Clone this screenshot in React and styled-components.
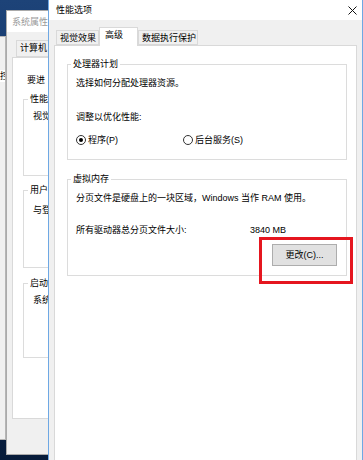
import React from 'react';
import styled, { createGlobalStyle } from 'styled-components';

const GlobalStyle = createGlobalStyle`
  html, body {
    margin: 0;
    padding: 0;
  }
  body {
    font-family: "Liberation Sans", "Noto Sans CJK SC", sans-serif;
    font-size: 9px;
    line-height: 12px;
    color: #000;
  }
`;

const Desktop = styled.div`
  position: relative;
  width: 363px;
  height: 460px;
  overflow: hidden;
  background: linear-gradient(180deg, #1d4378 0%, #12346a 30%, #071c3a 100%);
`;

// windows sit on the desktop, so they are placed by coordinates
const Window = styled.div`
  position: absolute;
  left: ${p => p.$left}px;
  top: ${p => p.$top}px;
  width: ${p => p.$w}px;
  height: ${p => p.$h}px;
  box-sizing: border-box;
  border: 1px solid ${p => p.$border || '#aaaaaa'};
  background: #f0f0f0;
  display: flex;
  flex-direction: column;
  overflow: hidden;
`;

const SideText = styled.div`
  margin-top: 33px;
  padding-left: 99px;
  background: #fff;
  white-space: nowrap;
`;

const TitleBar = styled.div`
  flex: none;
  height: ${p => p.$h}px;
  background: #fff;
  display: flex;
  align-items: center;
  justify-content: space-between;
  padding: 0 5px 0 ${p => p.$pl}px;
  color: ${p => (p.$inactive ? '#9a9a9a' : '#000')};
`;

const Body = styled.div`
  flex: 1;
  display: flex;
  flex-direction: column;
  padding: ${p => p.$pad};
  min-height: 0;
`;

const TabStrip = styled.div`
  flex: none;
  display: flex;
  align-items: flex-end;
  padding-left: ${p => p.$indent}px;
  height: ${p => p.$h}px;
`;

const Tab = styled.div`
  box-sizing: border-box;
  flex: none;
  width: ${p => p.$w}px;
  height: ${p => (p.$active ? 19 : p.$h || 15)}px;
  padding: ${p => (p.$active ? '1px 0 0 5px' : '1px 0 0 3px')};
  background: ${p => (p.$active ? '#fff' : '#f0f0f0')};
  border: 1px solid #d9d9d9;
  border-bottom: ${p => (p.$active ? 'none' : '1px solid #d9d9d9')};
  margin-bottom: ${p => (p.$active ? '-1px' : '0')};
  position: relative;
  z-index: ${p => (p.$active ? 1 : 0)};
  white-space: nowrap;
  overflow: hidden;
`;

const Panel = styled.div`
  flex: 1;
  background: #fff;
  border: 1px solid #d9d9d9;
  padding: ${p => p.$pad};
  display: flex;
  flex-direction: column;
`;

const Group = styled.fieldset`
  margin: ${p => p.$mt || 0}px 0 0 0;
  padding: ${p => p.$pad};
  border: 1px solid #dcdcdc;
  min-width: 0;
  box-sizing: border-box;
  height: ${p => (p.$h ? `${p.$h}px` : 'auto')};
  flex: none;
`;

const Legend = styled.legend`
  padding: 0 2px;
  margin-left: -5px;
  line-height: 12px;
`;

const Line = styled.div`
  margin-top: ${p => p.$mt || 0}px;
  margin-left: ${p => p.$ml || 0}px;
  white-space: nowrap;
`;

const RadioRow = styled.div`
  display: flex;
  margin-top: 11px;
  height: 12px;
`;

const RadioOption = styled.label`
  display: flex;
  align-items: center;
  width: ${p => p.$w}px;
  white-space: nowrap;
`;

const RadioDot = styled.span`
  box-sizing: border-box;
  width: 10px;
  height: 10px;
  border-radius: 50%;
  border: 1px solid #333;
  background: #fff;
  margin-right: 2px;
  display: flex;
  align-items: center;
  justify-content: center;

  &::after {
    content: '';
    width: 4px;
    height: 4px;
    border-radius: 50%;
    background: ${p => (p.$checked ? '#000' : 'transparent')};
  }
`;

const SizeRow = styled.div`
  display: grid;
  grid-template-columns: 174px auto;
  margin-top: 20px;
  white-space: nowrap;
`;

const ButtonRow = styled.div`
  display: flex;
  justify-content: flex-end;
  margin-top: 8px;
`;

const Highlight = styled.div`
  position: relative;

  &::after {
    content: '';
    position: absolute;
    left: -13px;
    top: -7px;
    width: 94px;
    height: 47px;
    box-sizing: border-box;
    border: 3px solid #e5161f;
    pointer-events: none;
  }
`;

const Button = styled.button`
  box-sizing: border-box;
  width: 65px;
  height: 22px;
  margin: 0;
  padding: 0;
  background: #e1e1e1;
  border: 1px solid #adadad;
  font: inherit;
  color: #000;
`;

const CloseIcon = () => (
  <svg width="9" height="9" viewBox="0 0 9 9">
    <path d="M0.5 0.5 L8.5 8.5 M8.5 0.5 L0.5 8.5" stroke="#111" strokeWidth="1" fill="none" />
  </svg>
);

const App = () => (
  <>
    <GlobalStyle />
    <Desktop>
      <Window $left={-100} $top={36} $w={106} $h={404} $border="#b5b5b5">
        <SideText>控</SideText>
      </Window>

      <Window $left={6} $top={10} $w={300} $h={445}>
        <TitleBar $h={21} $pl={5} $inactive>
          <span>系统属性</span>
        </TitleBar>
        <Body $pad="8px 0 35px 5px">
          <TabStrip $indent={4} $h={17}>
            <Tab $w={60} $h={17}>计算机</Tab>
          </TabStrip>
          <Panel $pad="16px 0 0 10px">
            <Line $ml={4}>要进</Line>
            <Group $mt={7} $h={83} $pad="5px 0 0 9px">
              <Legend>性能</Legend>
              <Line>视觉</Line>
            </Group>
            <Group $mt={8} $h={84} $pad="8px 0 0 9px">
              <Legend>用户</Legend>
              <Line>与登</Line>
            </Group>
            <Group $mt={9} $h={81} $pad="5px 0 0 9px">
              <Legend>启动</Legend>
              <Line>系统</Line>
            </Group>
          </Panel>
        </Body>
      </Window>

      <Window $left={48} $top={-1} $w={315} $h={475} $border="#6ea8e4">
        <TitleBar $h={20} $pl={7}>
          <span>性能选项</span>
          <CloseIcon />
        </TitleBar>
        <Body $pad="7px 5px 0 5px">
          <TabStrip $indent={2} $h={18}>
            <Tab $w={43}>视觉效果</Tab>
            <Tab $w={39} $active>高级</Tab>
            <Tab $w={60}>数据执行保护</Tab>
          </TabStrip>
          <Panel $pad="12px 9px 0 12px">
            <Group $pad="7px 9px 13px 8px">
              <Legend>处理器计划</Legend>
              <Line>选择如何分配处理器资源。</Line>
              <Line $mt={22}>调整以优化性能:</Line>
              <RadioRow>
                <RadioOption $w={107}>
                  <RadioDot $checked />
                  程序(P)
                </RadioOption>
                <RadioOption $w={120}>
                  <RadioDot />
                  后台服务(S)
                </RadioOption>
              </RadioRow>
            </Group>
            <Group $mt={13} $pad="7px 9px 9px 8px">
              <Legend>虚拟内存</Legend>
              <Line>分页文件是硬盘上的一块区域，Windows 当作 RAM 使用。</Line>
              <SizeRow>
                <span>所有驱动器总分页文件大小:</span>
                <span>3840 MB</span>
              </SizeRow>
              <ButtonRow>
                <Highlight>
                  <Button>更改(C)...</Button>
                </Highlight>
              </ButtonRow>
            </Group>
          </Panel>
        </Body>
      </Window>
    </Desktop>
  </>
);

export default App;
